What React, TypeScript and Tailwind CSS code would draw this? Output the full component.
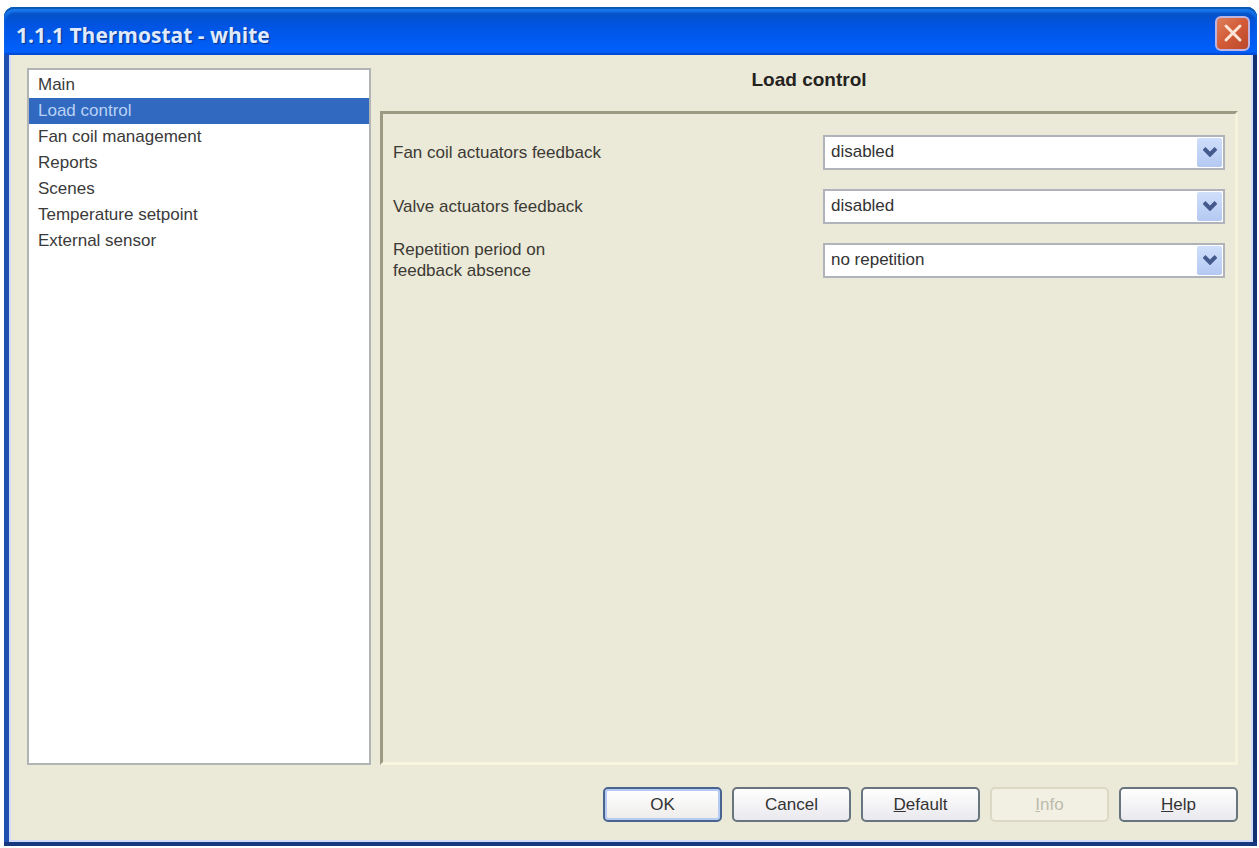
import React, { useState } from "react";

type Parameter = {
  id: string;
  label: string;
  options: string[];
};

type DialogButtonProps = {
  children: React.ReactNode;
  variant?: "normal" | "primary";
  disabled?: boolean;
};

const pages = [
  "Main",
  "Load control",
  "Fan coil management",
  "Reports",
  "Scenes",
  "Temperature setpoint",
  "External sensor",
];

const parameters: Parameter[] = [
  {
    id: "fan-coil-feedback",
    label: "Fan coil actuators feedback",
    options: ["disabled", "enabled"],
  },
  {
    id: "valve-feedback",
    label: "Valve actuators feedback",
    options: ["disabled", "enabled"],
  },
  {
    id: "repetition-period",
    label: "Repetition period on\nfeedback absence",
    options: ["no repetition", "1 minute", "5 minutes"],
  },
];

function TitleBar({ title }: { title: string }) {
  return (
    <header className="flex h-12 items-center justify-between rounded-t-[10px] bg-linear-to-b from-[#0a4fb8] via-[#0054e3] via-40% to-[#0062ff] pl-3 pr-[7px] shadow-[inset_0_2px_1px_#0a58b0,inset_0_5px_3px_#1a7cf5,inset_0_-2px_2px_#0048d0]">
      <h1 className="pt-2 font-['Open_Sans',sans-serif] text-[21px] leading-7 font-bold text-[#dfeaff] [text-shadow:1px_1px_1px_#0a318a]">
        {title}
      </h1>
      <button
        type="button"
        aria-label="Close"
        className="mt-2 mb-1 flex size-[35px] items-center justify-center rounded-md border-2 border-[#bfb4e0] bg-linear-to-br from-[#dd7f5c] via-[#d35a36] to-[#b9492c]"
      >
        <svg
          viewBox="0 0 20 20"
          className="size-5 stroke-[#fbe6d8]"
          strokeWidth="3"
          strokeLinecap="round"
        >
          <path d="M3 3 17 17M17 3 3 17" />
        </svg>
      </button>
    </header>
  );
}

function ParameterRow({ parameter }: { parameter: Parameter }) {
  return (
    <div className="grid min-h-[54px] grid-cols-[431fr_403fr] items-center">
      <label
        htmlFor={parameter.id}
        className="whitespace-pre-line leading-[21px] text-[#3b3a34]"
      >
        {parameter.label}
      </label>
      <div className="relative">
        <select
          id={parameter.id}
          className="block h-[35px] w-full appearance-none border-2 border-[#b0b4ba] bg-white pl-1.5 pr-8 text-[#333]"
        >
          {parameter.options.map((option) => (
            <option key={option}>{option}</option>
          ))}
        </select>
        <span className="pointer-events-none absolute inset-y-[3px] right-[3px] flex w-[25px] items-center justify-center rounded-xs bg-linear-to-b from-[#cfdffb] to-[#b4c8f2]">
          <svg
            viewBox="0 0 14 10"
            className="h-2.5 w-3.5 fill-none stroke-[#44598c]"
            strokeWidth="4"
          >
            <path d="M1 1.5 7 7.5 13 1.5" />
          </svg>
        </span>
      </div>
    </div>
  );
}

function DialogButton({
  children,
  variant = "normal",
  disabled,
}: DialogButtonProps) {
  const look = disabled
    ? "border-[#dbd8c6] bg-[#f2f0e2] text-[#bdbbad]"
    : variant === "primary"
      ? "border-[#4a6490] bg-linear-to-b from-white to-[#edecea] text-[#333] shadow-[inset_0_0_0_2px_#b5cbf3]"
      : "border-[#68747e] bg-linear-to-b from-white to-[#e9e8ee] text-[#333]";

  return (
    <button
      type="button"
      disabled={disabled}
      className={`h-[35px] w-[119px] rounded-[5px] border-2 ${look}`}
    >
      {children}
    </button>
  );
}

export default function App() {
  const [page, setPage] = useState("Load control");

  return (
    <div className="flex min-h-screen flex-col bg-white pt-[7px] pr-0.5 pb-0.5 pl-1 font-['Liberation_Sans',Arial,sans-serif] text-[17px]">
      <div className="flex grow flex-col rounded-t-[10px] bg-linear-to-r from-[#1f4fae] to-[#12306f]">
        <TitleBar title="1.1.1 Thermostat - white" />

        <div className="mr-1 ml-[5px] flex grow flex-col border-2 border-t-0 border-[#d2dcfa] bg-[#ebe9d8] pt-[13px] pr-[13px] pb-[18px] pl-4">
          <div className="flex grow gap-[9px]">
            <nav className="w-[344px] shrink-0 border-2 border-[#b1b4b4] bg-white py-[2px]">
              <ul>
                {pages.map((name) => (
                  <li key={name}>
                    <button
                      type="button"
                      onClick={() => setPage(name)}
                      className={`block h-[26px] w-full pl-[9px] text-left ${
                        name === page
                          ? "bg-[#3169c0] text-[#b9d2f5]"
                          : "text-[#3a3a3a]"
                      }`}
                    >
                      {name}
                    </button>
                  </li>
                ))}
              </ul>
            </nav>

            <main className="flex grow flex-col">
              <h2 className="h-[43px] text-center text-[19px] leading-6 font-bold text-[#24231e]">
                {page}
              </h2>
              <section className="grow border-[3px] border-t-[#9d9a84] border-r-[#f6f3dc] border-b-[#f8f6dc] border-l-[#9d9a84] pt-[11px] pr-2.5 pl-2.5">
                {parameters.map((parameter) => (
                  <ParameterRow key={parameter.id} parameter={parameter} />
                ))}
              </section>
            </main>
          </div>

          <footer className="mt-[22px] flex justify-end gap-2.5">
            <DialogButton variant="primary">OK</DialogButton>
            <DialogButton>Cancel</DialogButton>
            <DialogButton>
              <u>D</u>efault
            </DialogButton>
            <DialogButton disabled>
              <u>I</u>nfo
            </DialogButton>
            <DialogButton>
              <u>H</u>elp
            </DialogButton>
          </footer>
        </div>
        <div className="h-1 bg-[#17377f]" />
      </div>
    </div>
  );
}
